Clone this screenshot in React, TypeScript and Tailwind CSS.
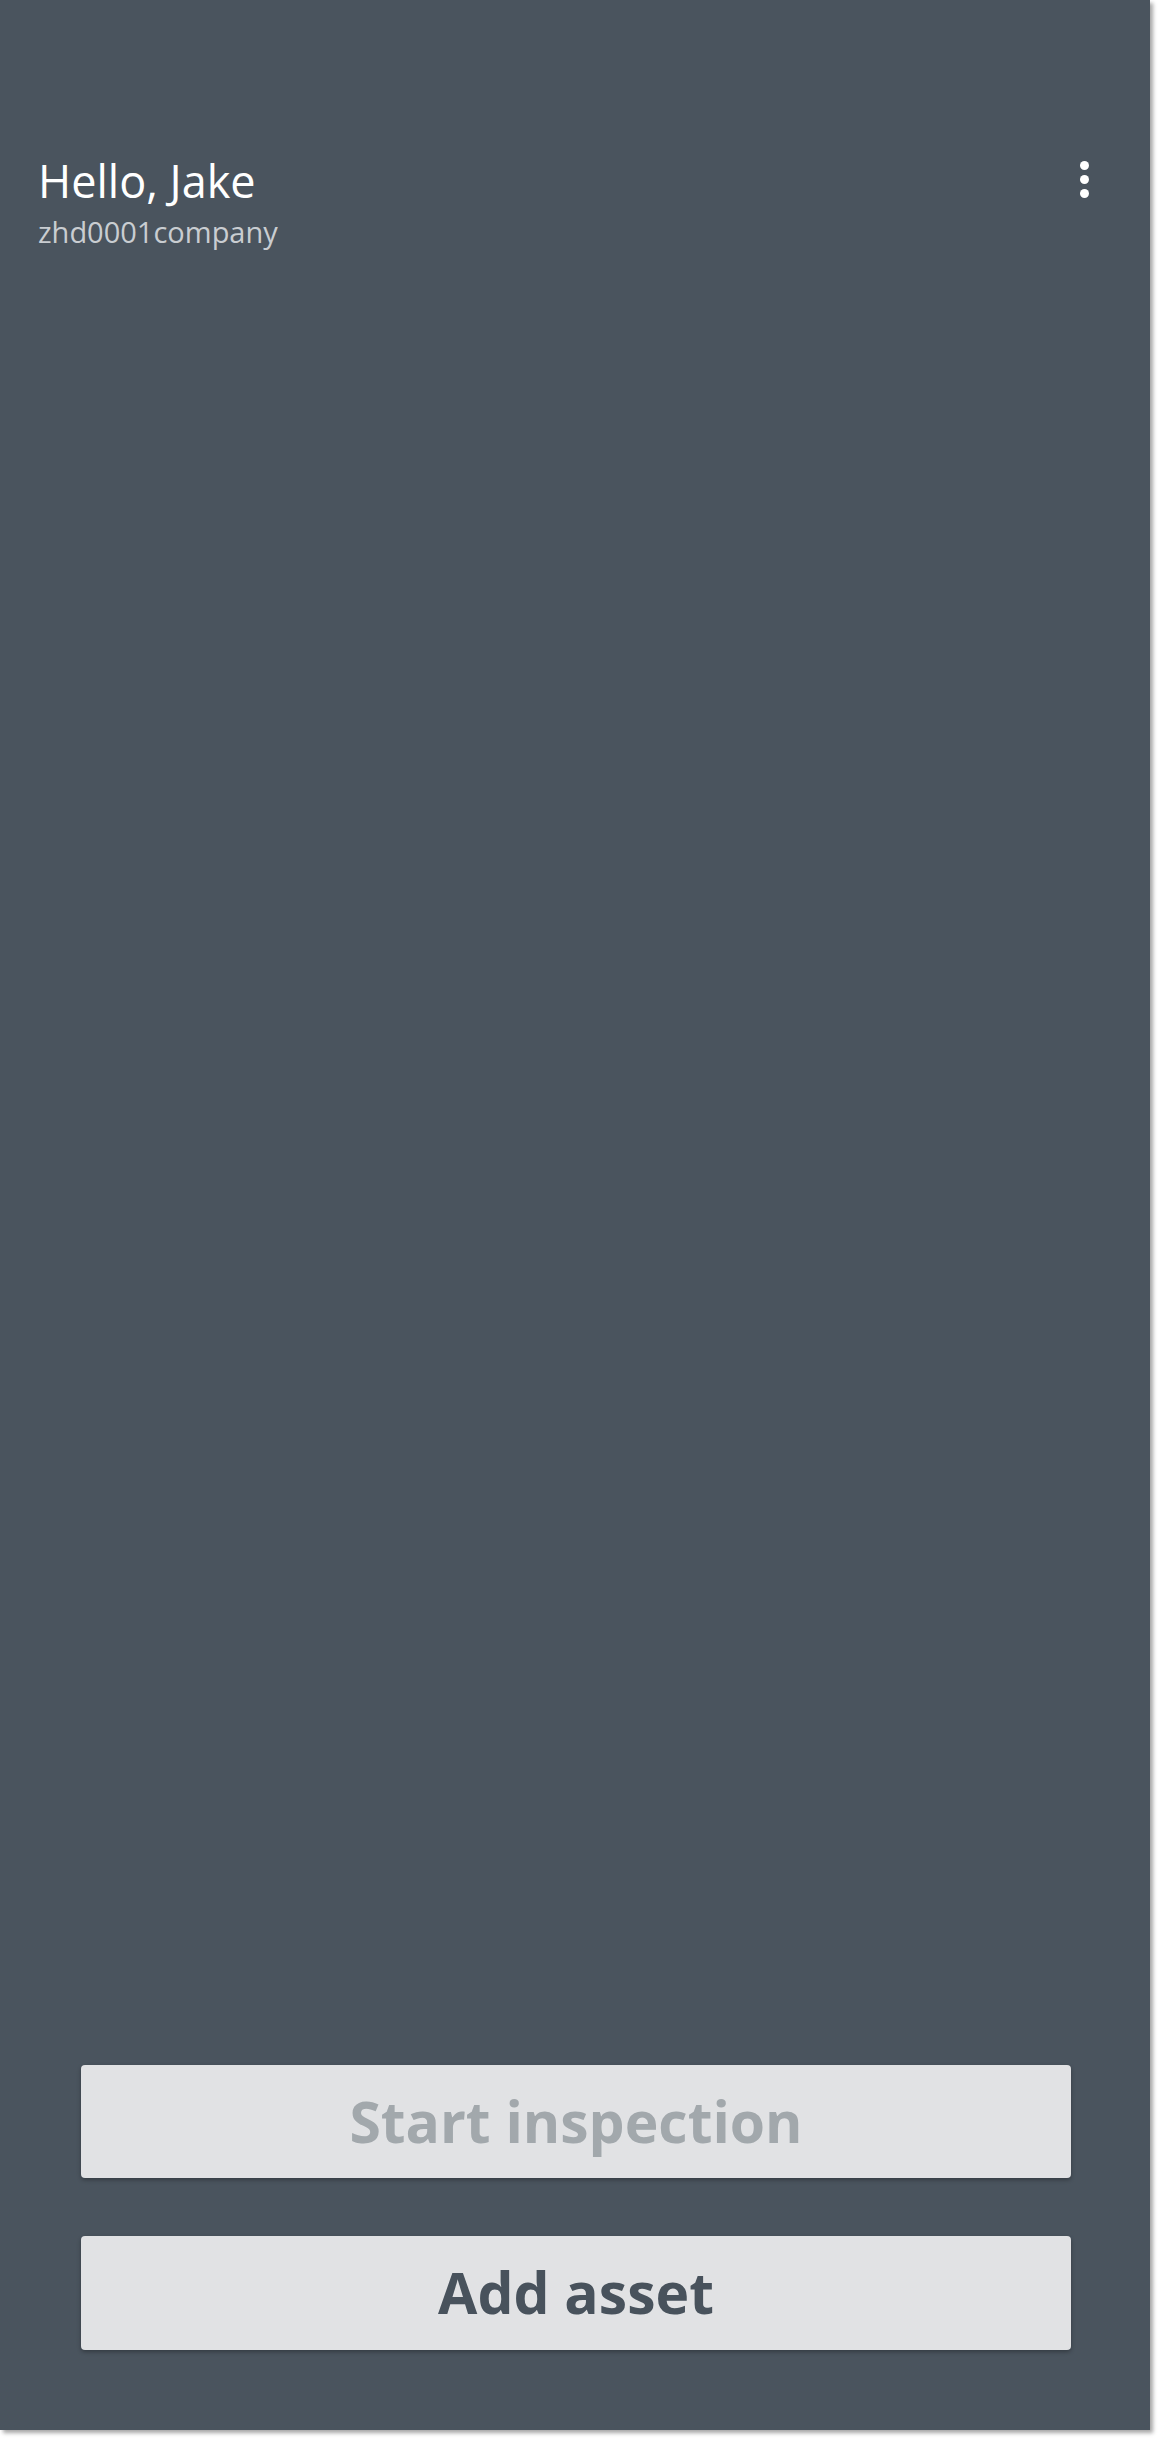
import React from "react";

export default function App() {
  return (
    <div className="w-[1160px] h-[2440px] bg-white" style={{ fontFamily: '"Open Sans", "Noto Sans", sans-serif' }}>
      <div className="w-[1150px] h-[2430px] bg-[#4a545e] flex flex-col shadow-[3px_3px_4px_rgba(0,0,0,0.35)]">
        <div className="flex items-start justify-between pt-[155px] pl-[38px] pr-[56px]">
          <div className="flex flex-col gap-[6px]">
            <div className="text-[45px] leading-[52px] font-medium text-white">Hello, Jake</div>
            <div className="text-[29px] leading-[37px] text-[#c9cdd1]">zhd0001company</div>
          </div>
          <div className="flex flex-col items-center gap-[5px] pt-[6px] w-[20px]">
            <span className="block w-[9px] h-[9px] rounded-full bg-white" />
            <span className="block w-[9px] h-[9px] rounded-full bg-white" />
            <span className="block w-[9px] h-[9px] rounded-full bg-white" />
          </div>
        </div>
        <div className="flex-1" />
        <div className="flex flex-col gap-[58px] pl-[81px] pr-[79px] pb-[80px]">
          <button className="h-[113px] w-full rounded bg-[#e1e2e4] flex items-center justify-center text-[57px] font-bold text-[#a2a8ac] shadow-[0_2px_4px_rgba(0,0,0,0.3)]">
            Start inspection
          </button>
          <button className="h-[114px] w-full rounded bg-[#e1e2e4] flex items-center justify-center text-[57px] font-bold text-[#48525c] shadow-[0_2px_4px_rgba(0,0,0,0.3)]">
            Add asset
          </button>
        </div>
      </div>
    </div>
  );
}
